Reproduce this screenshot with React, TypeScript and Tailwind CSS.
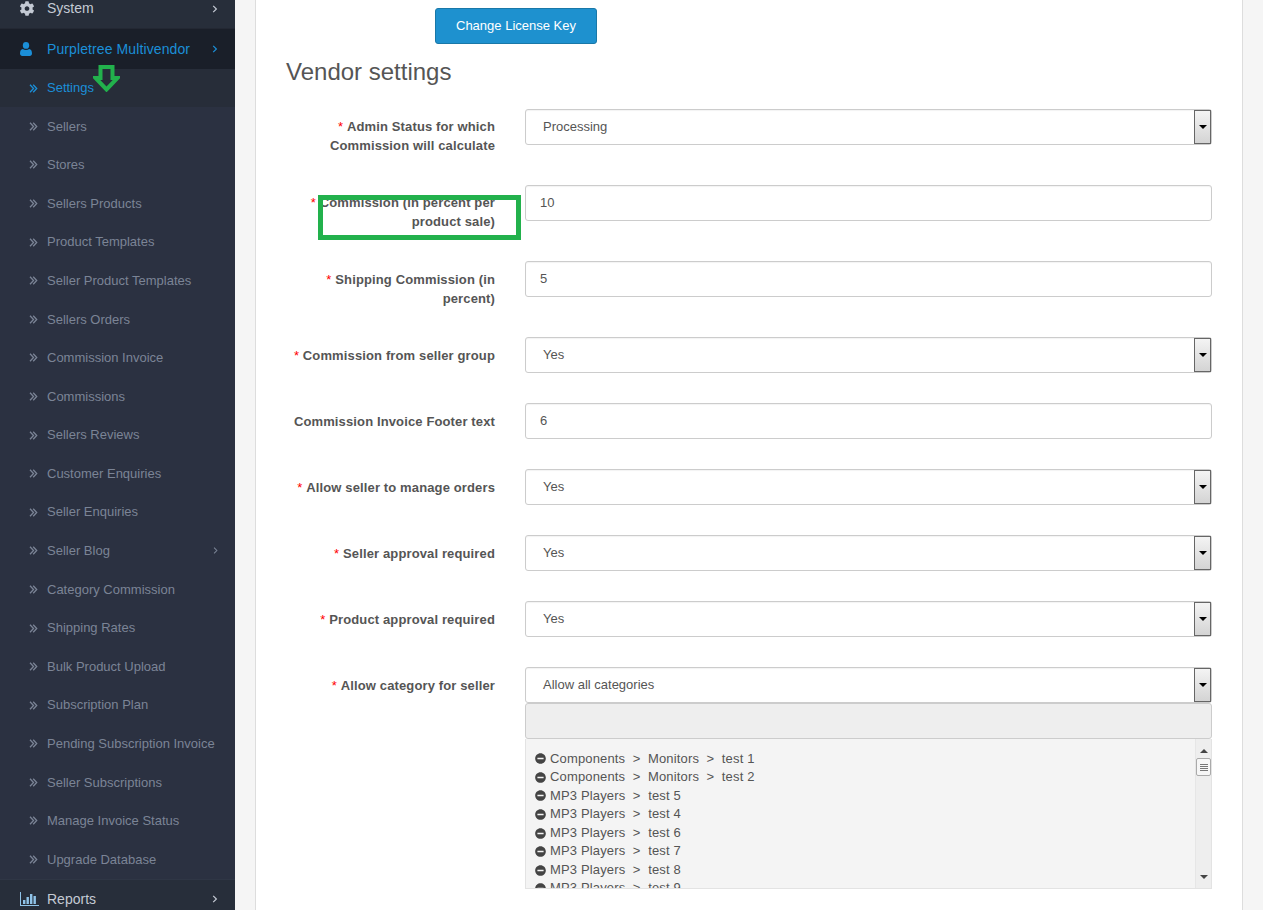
import { FaCog, FaMinusCircle } from 'react-icons/fa';

const subItems = [
  'Sellers',
  'Stores',
  'Sellers Products',
  'Product Templates',
  'Seller Product Templates',
  'Sellers Orders',
  'Commission Invoice',
  'Commissions',
  'Sellers Reviews',
  'Customer Enquiries',
  'Seller Enquiries',
  'Seller Blog',
  'Category Commission',
  'Shipping Rates',
  'Bulk Product Upload',
  'Subscription Plan',
  'Pending Subscription Invoice',
  'Seller Subscriptions',
  'Manage Invoice Status',
  'Upgrade Database',
];

const categories = [
  'Components\u00a0 >\u00a0 Monitors\u00a0 >\u00a0 test 1',
  'Components\u00a0 >\u00a0 Monitors\u00a0 >\u00a0 test 2',
  'MP3 Players\u00a0 >\u00a0 test 5',
  'MP3 Players\u00a0 >\u00a0 test 4',
  'MP3 Players\u00a0 >\u00a0 test 6',
  'MP3 Players\u00a0 >\u00a0 test 7',
  'MP3 Players\u00a0 >\u00a0 test 8',
  'MP3 Players\u00a0 >\u00a0 test 9',
];

function BarChartIcon() {
  return (
    <svg width="19" height="14" viewBox="0 0 19 14" fill="currentColor">
      <path d="M0 0h1v13h18v1H0z" />
      <rect x="3" y="8" width="2.4" height="4" />
      <rect x="6.5" y="5" width="2.4" height="7" />
      <rect x="10" y="2" width="2.4" height="10" />
      <rect x="13.5" y="4" width="2.4" height="8" />
    </svg>
  );
}

function UserIcon() {
  return (
    <svg width="12" height="14" viewBox="0 0 12 14" fill="currentColor">
      <ellipse cx="6" cy="3.4" rx="3.2" ry="3.4" />
      <path d="M0 11.5C0 8.8 1 7.2 2.8 7c.9.7 2 1.1 3.2 1.1S8.300 7.700 9.200 7C11 7.200 12 8.800 12 11.500 12 13 11 14 9.800 14H2.200C1 14 0 13 0 11.500z" />
    </svg>
  );
}

function AngleRight({ size = 8 }: { size?: number }) {
  return (
    <svg width={size * 0.7} height={size} viewBox="0 0 7 10" fill="none" stroke="currentColor" strokeWidth="1.5">
      <path d="M1.500 1l4 4-4 4" />
    </svg>
  );
}

function AngleDouble() {
  return (
    <svg width="9" height="9" viewBox="0 0 9 9" fill="none" stroke="currentColor" strokeWidth="1.3">
      <path d="M1 .8l3.500 3.700L1 8.200M4.200 .8l3.500 3.700-3.500 3.700" />
    </svg>
  );
}

function SelectBox({ value }: { value: string }) {
  return (
    <div className="flex h-[36px] w-[687px] items-center justify-between rounded-[3px] border border-[#ccc] bg-white pl-[17px] shadow-[inset_0_1px_1px_rgba(0,0,0,0.05)]">
      <span>{value}</span>
      <span className="flex h-[34px] w-[17px] items-center justify-center border border-[#666] bg-gradient-to-b from-[#f4f4f4] to-[#d4d4d4]">
        <span className="h-0 w-0 border-x-[4px] border-t-[4px] border-x-transparent border-t-black" />
      </span>
    </div>
  );
}

function TextBox({ value }: { value: string }) {
  return (
    <div className="flex h-[36px] w-[687px] items-center rounded-[3px] border border-[#ccc] bg-white pl-[14px] shadow-[inset_0_1px_1px_rgba(0,0,0,0.05)]">
      {value}
    </div>
  );
}

function FormRow({ label, required = true, height, low, children }: { label: string; required?: boolean; height: string; low?: boolean; children: React.ReactNode }) {
  return (
    <div className={`flex ${height}`}>
      <label className={`w-[209px] shrink-0 text-right text-[13px] leading-[18.5px] font-bold tracking-[0.13px] text-[#555] ${low ? 'pt-[10px]' : 'pt-[9px]'}`}>
        {required && <span className="font-normal text-[#f00]">* </span>}
        {label}
      </label>
      <div className="pl-[30px]">{children}</div>
    </div>
  );
}

export default function App() {
  return (
    <div className="relative flex h-[910px] w-[1263px] overflow-hidden bg-[#f5f5f5] font-['Liberation_Sans',Arial,sans-serif] text-[13px] text-[#555]">
      {/* Sidebar */}
      <aside className="flex h-[910px] w-[235px] shrink-0 flex-col overflow-hidden bg-[#2b3141]">
        <div className="-mt-[11px] flex h-[40px] shrink-0 items-center border-b border-[#232833] bg-[#272e3a] pl-[19px] pr-[17px] text-[14px] text-[#c4cad4]">
          <FaCog className="w-[16px] text-[15px]" />
          <span className="ml-[12px] flex-1">System</span>
          <AngleRight />
        </div>
        <div className="flex h-[40px] shrink-0 items-center bg-[#1a1f29] pl-[20px] pr-[17px] text-[14px] tracking-[0.1px] text-[#1b8fd8]">
          <UserIcon />
          <span className="ml-[15px] flex-1">Purpletree Multivendor</span>
          <AngleRight />
        </div>
        <div className="flex h-[38px] shrink-0 items-center bg-[#272d39] pl-[29px] text-[13px] text-[#1b8fd8]">
          <AngleDouble />
          <span className="ml-[9px]">Settings</span>
        </div>
        {subItems.map((item) => (
          <div key={item} className="flex h-[38.6px] shrink-0 items-center pl-[29px] pr-[17px] text-[13px] text-[#7b8496]">
            <AngleDouble />
            <span className="ml-[9px] flex-1">{item}</span>
            {item === 'Seller Blog' && <AngleRight size={7} />}
          </div>
        ))}
        <div className="flex h-[40px] shrink-0 items-center border-t border-[#2f3645] bg-[#272e3a] pl-[20px] pr-[17px] text-[14px] text-[#c4cad4]">
          <span className="text-[#8fc3e8]">
            <BarChartIcon />
          </span>
          <span className="ml-[8px] flex-1">Reports</span>
          <AngleRight />
        </div>
      </aside>

      {/* Panel */}
      <main className="ml-[20px] h-[910px] w-[988px] shrink-0 border-x border-[#ddd] bg-white pl-[30px]">
        <div className="pl-[149px] pt-[8px]">
          <button className="h-[36px] w-[162px] rounded-[3px] border border-[#1978a8] bg-[#1e91cf] text-[13px] text-white">
            Change License Key
          </button>
        </div>
        <h2 className="mt-[14px] h-[28px] text-[24px] leading-[28px] font-normal text-[#555]">Vendor settings</h2>
        <div className="pt-[23px]">
          <FormRow label="Admin Status for which Commission will calculate" height="h-[76px]">
            <SelectBox value="Processing" />
          </FormRow>
          <FormRow label="Commission (in percent per product sale)" height="h-[76px]">
            <TextBox value="10" />
          </FormRow>
          <FormRow label="Shipping Commission (in percent)" height="h-[76px]" low>
            <TextBox value="5" />
          </FormRow>
          <FormRow label="Commission from seller group" height="h-[66px]" low>
            <SelectBox value="Yes" />
          </FormRow>
          <FormRow label="Commission Invoice Footer text" required={false} height="h-[66px]" low>
            <TextBox value="6" />
          </FormRow>
          <FormRow label="Allow seller to manage orders" height="h-[66px]" low>
            <SelectBox value="Yes" />
          </FormRow>
          <FormRow label="Seller approval required" height="h-[66px]" low>
            <SelectBox value="Yes" />
          </FormRow>
          <FormRow label="Product approval required" height="h-[66px]" low>
            <SelectBox value="Yes" />
          </FormRow>
          <FormRow label="Allow category for seller" height="h-[222px]" low>
            <SelectBox value="Allow all categories" />
            <div className="h-[36px] w-[687px] rounded-[3px] border border-[#ccc] bg-[#eee]" />
            <div className="flex h-[150px] w-[687px] overflow-hidden border border-t-0 border-[#e3e3e3] bg-[#f4f4f4]">
              <ul className="flex-1 pl-[9px] pt-[10.5px] leading-[18.57px] tracking-[0.15px]">
                {categories.map((c) => (
                  <li key={c} className="flex items-center whitespace-pre">
                    <FaMinusCircle className="mr-[4px] w-[11px] text-[11px] text-[#444]" />
                    {c}
                  </li>
                ))}
              </ul>
              <div className="flex w-[16px] flex-col items-center border-l border-[#e6e6e6] bg-[#eee] pt-[10px]">
                <span className="h-0 w-0 border-x-[4px] border-b-[4px] border-x-transparent border-b-[#444]" />
                <span className="mt-[5px] flex h-[18px] w-[15px] flex-col items-center justify-center gap-px rounded-[2px] border border-[#aaa] bg-[#f6f6f6]">
                  <span className="h-px w-[8px] bg-[#777]" />
                  <span className="h-px w-[8px] bg-[#777]" />
                  <span className="h-px w-[8px] bg-[#777]" />
                  <span className="h-px w-[8px] bg-[#777]" />
                </span>
                <span className="mt-auto mb-[9px] h-0 w-0 border-x-[4px] border-t-[4px] border-x-transparent border-t-[#444]" />
              </div>
            </div>
          </FormRow>
        </div>
      </main>

      {/* Annotations drawn over the screenshot */}
      <div className="absolute left-[318px] top-[195px] h-[45px] w-[203px] border-[5px] border-[#22b14c]" />
      <svg className="absolute left-[93px] top-[65px]" width="27" height="27" viewBox="0 0 27 27" fill="none">
        <path d="M7.500 2h12v11h5L13.500 24.500 2.500 13h5z" stroke="#22b14c" strokeWidth="4" />
      </svg>
    </div>
  );
}
